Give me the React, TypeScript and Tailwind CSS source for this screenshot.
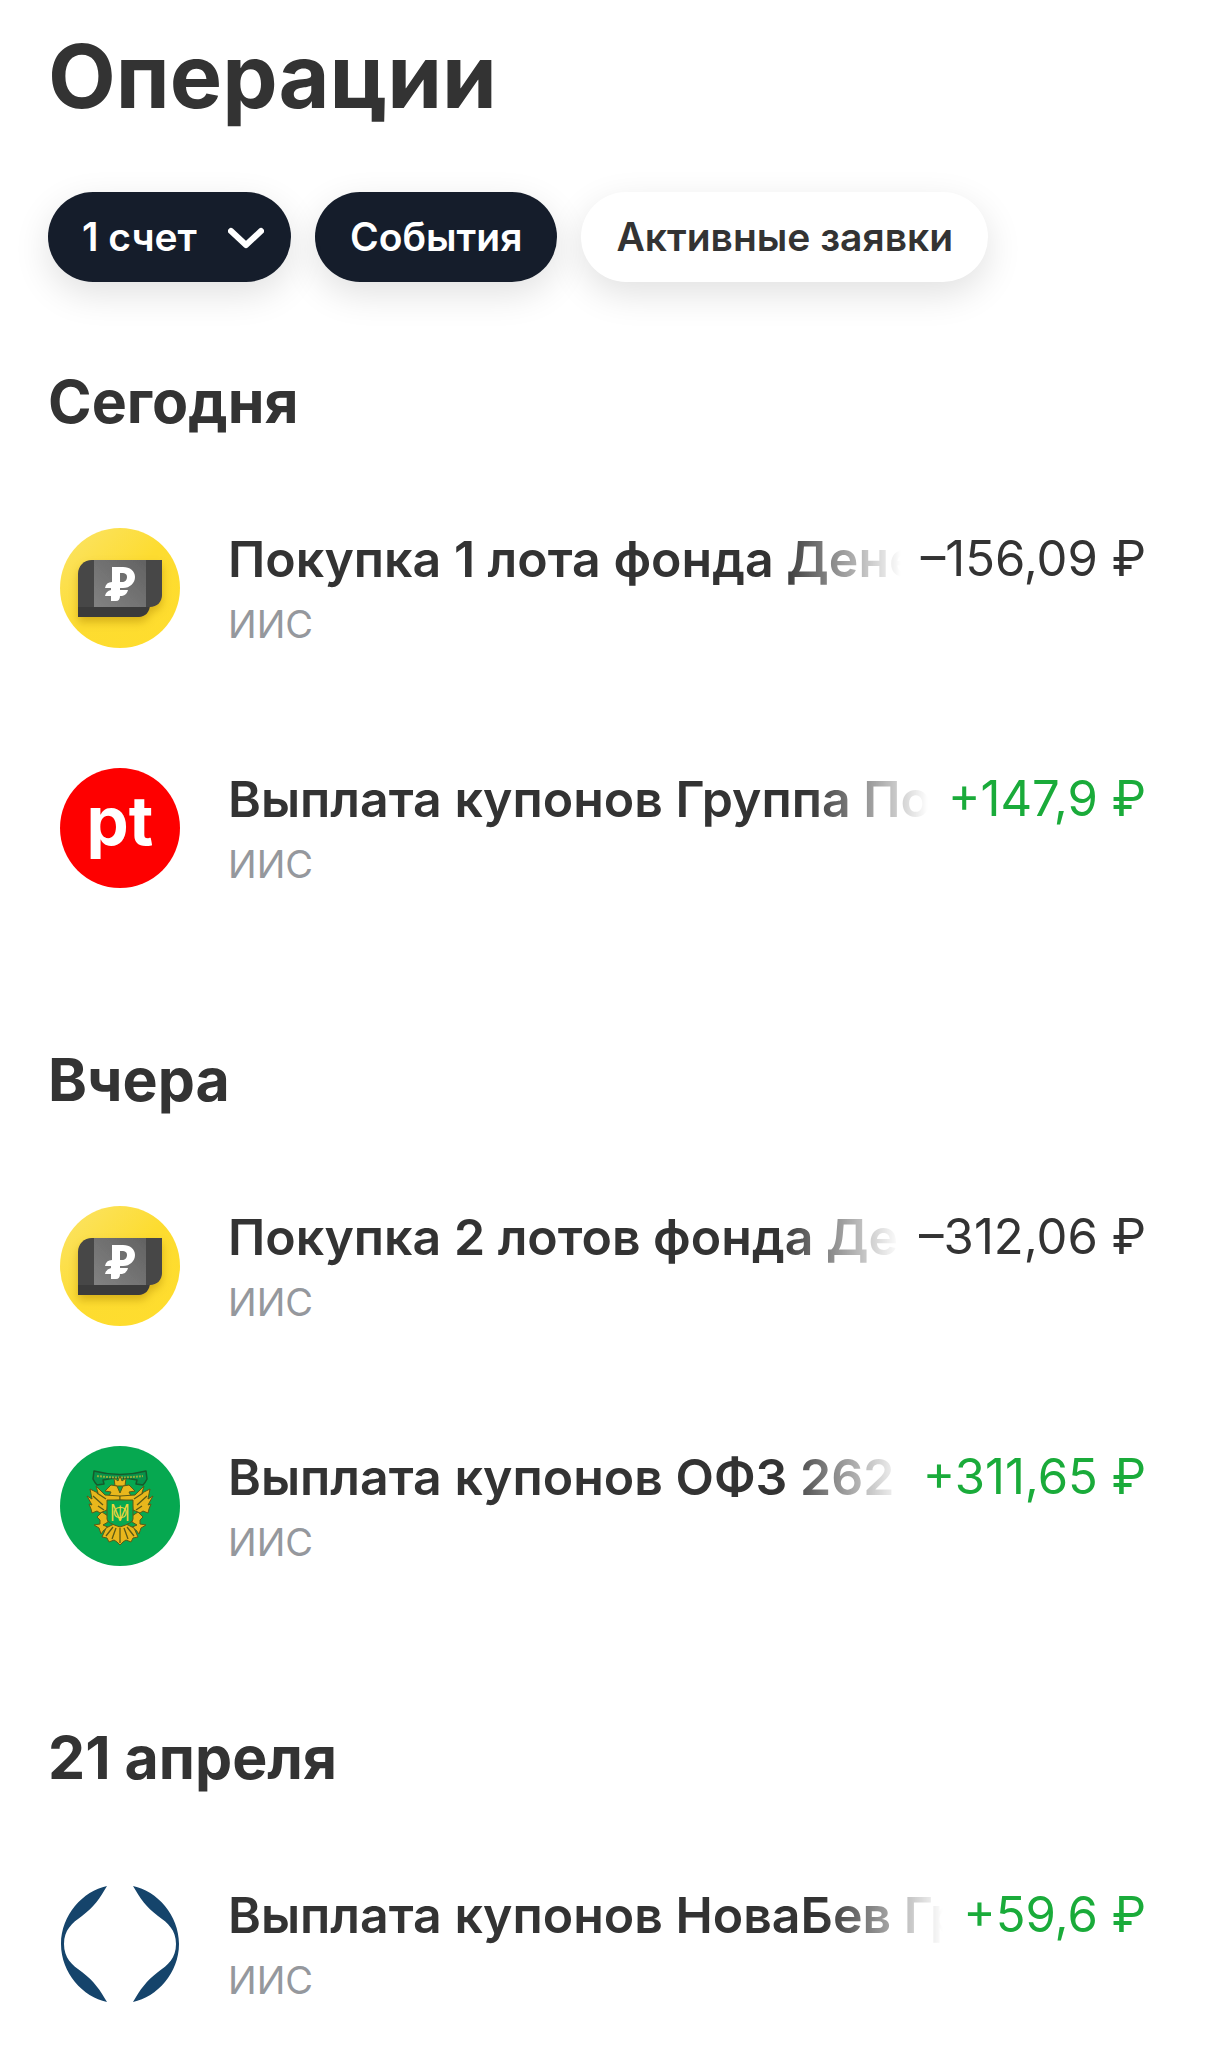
import type { ReactNode } from 'react';

type Operation = {
  title: string;
  account: string;
  amount: string;
  income?: boolean;
  icon: ReactNode;
};

type Day = { label: string; operations: Operation[] };

/** Money market fund: dark banknote on a yellow disc. */
function FundIcon() {
  return (
    <svg viewBox="0 0 120 120" className="size-[120px] shrink-0" aria-hidden="true">
      <defs>
        <linearGradient id="fund-disc" x1="0" y1="0" x2="1" y2="1">
          <stop offset="0" stopColor="#fbe46a" />
          <stop offset="0.5" stopColor="#fddc30" />
          <stop offset="1" stopColor="#ffdd2d" />
        </linearGradient>
        <linearGradient id="fund-note" x1="1" y1="0" x2="0" y2="1">
          <stop offset="0" stopColor="#626262" />
          <stop offset="1" stopColor="#828282" />
        </linearGradient>
        <filter id="fund-shadow" x="-20%" y="-20%" width="140%" height="160%">
          <feDropShadow dx="0" dy="5" stdDeviation="4" floodColor="#a87f00" floodOpacity="0.45" />
        </filter>
      </defs>
      <circle cx="60" cy="60" r="60" fill="url(#fund-disc)" />
      <g filter="url(#fund-shadow)">
        <path d="M18 78h72v-1c0 7-5 12-11 12H18z" fill="#3a3a3b" />
        <path d="M32 32h70v35c0 7-5 12-12 12H18V46c0-8 6-14 14-14z" fill="#464646" />
        <path d="M34 32h52v47H34z" fill="url(#fund-note)" />
      </g>
      <path
        d="M52 39h11c7 0 12 4 12 10s-5 11-12 11h-3v2h8q-1 5-6 6h-2q0 5-4 5h-5v-5h-6q1-5 6-6v-2h-6q1-6 7-6zM60 45v9h2c3 0 5-2 5-5s-2-4-5-4z"
        fill="#fff"
        fillRule="evenodd"
      />
    </svg>
  );
}

function PositiveIcon() {
  return (
    <svg viewBox="0 0 120 120" className="size-[120px] shrink-0" aria-hidden="true">
      <circle cx="60" cy="60" r="60" fill="#fe0000" />
      <text
        x="60"
        y="77"
        textAnchor="middle"
        fontFamily="Inter, sans-serif"
        fontSize="67"
        fontWeight="700"
        fill="#fff"
      >
        pt
      </text>
    </svg>
  );
}

/** Ministry of Finance emblem. */
function TreasuryIcon() {
  return (
    <svg viewBox="0 0 120 120" className="size-[120px] shrink-0" aria-hidden="true">
      <circle cx="60" cy="60" r="60" fill="#06a850" />
      {/* ribbon */}
      <path
        d="M34 25q26 7 52 0l1 8q-2 4-4 6l-7-1 1-4q-17-4-34 0l1 4-7 1q-2-2-4-6z"
        fill="#07924a"
        stroke="#175a2b"
        strokeWidth="1.5"
        strokeLinejoin="round"
      />
      <path d="M37 30q23 3 46 0" fill="none" stroke="#8fae3a" strokeWidth="2" strokeDasharray="2 1" />
      <g stroke="#5b5a16" strokeWidth="1" strokeLinejoin="round" fill="#e9b71c">
        {/* crown and heads */}
        <path d="M54 32l4 3 2-5 2 5 4-3-1 8H55z" />
        <path d="M45 45l6-6 6 1 3 7 3-7 6-1 6 6-6 1 3 6H48l3-6z" />
        {/* wings */}
        <path d="M30 43l8 4-2-7 9 9 15 1v4l-12 1-1 9-7 3-3-2-5 2-1-4-2-5 3 1-5-9 5 3z" />
        <path d="M90 43l-8 4 2-7-9 9-15 1v4l12 1 1 9 7 3 3-2 5 2 1-4 2-5-3 1 5-9-5 3z" />
        {/* claws */}
        <path d="M42 66l6 4v6l-5 3 7 3-6 2-3 4-2-6-5-3 6-1v-4l-3-3z" />
        <path d="M78 66l-6 4v6l5 3-7 3 6 2 3 4 2-6 5-3-6-1v-4l3-3z" />
        {/* tail */}
        <path d="M54 78l-8 4-4 9 5 1 2 4 5-2 3 2 3 3 3-3 3-2 5 2 2-4 5-1-4-9-8-4-6 2z" />
      </g>
      <path
        d="M60 82v15M56 82l-4 11M64 82l4 11M53 81l-7 9M67 81l7 9M33 50l10 9M37 47l9 6M38 60l6 4M87 50l-10 9M83 47l-9 6M82 60l-6 4"
        stroke="#5b5a16"
        strokeWidth="1.3"
      />
      <path d="M47 54h26v19q0 4-13 8-13-4-13-8z" fill="#06a850" stroke="#5b5a16" strokeWidth="1" />
      <g fontFamily="Roboto, sans-serif" fontWeight="300" fill="#f0d63c" textAnchor="middle">
        <text x="60" y="75" fontSize="24">
          М
        </text>
        <text x="60" y="73" fontSize="19">
          Ф
        </text>
      </g>
    </svg>
  );
}

function NovabevIcon() {
  return (
    <svg viewBox="0 0 120 120" className="size-[120px] shrink-0" aria-hidden="true" fill="#15446b">
      <path d="M47 2C23 7 1 31 1 60s22 53 46 58C40 106 34 97 22 88 12 81 4 74 4 60s8-21 18-28C34 23 40 14 47 2z" />
      <path d="M73 2c24 5 46 29 46 58s-22 53-46 58c7-12 13-21 25-30 10-7 18-14 18-28s-8-21-18-28C86 23 80 14 73 2z" />
    </svg>
  );
}

const DAYS: Day[] = [
  {
    label: 'Сегодня',
    operations: [
      { title: 'Покупка 1 лота фонда Дене', account: 'ИИС', amount: '–156,09 ₽', icon: <FundIcon /> },
      { title: 'Выплата купонов Группа По', account: 'ИИС', amount: '+147,9 ₽', income: true, icon: <PositiveIcon /> },
    ],
  },
  {
    label: 'Вчера',
    operations: [
      { title: 'Покупка 2 лотов фонда Де', account: 'ИИС', amount: '–312,06 ₽', icon: <FundIcon /> },
      { title: 'Выплата купонов ОФЗ 262', account: 'ИИС', amount: '+311,65 ₽', income: true, icon: <TreasuryIcon /> },
    ],
  },
  {
    label: '21 апреля',
    operations: [
      { title: 'Выплата купонов НоваБев Гр', account: 'ИИС', amount: '+59,6 ₽', income: true, icon: <NovabevIcon /> },
    ],
  },
];

function Filters() {
  return (
    <div className="mt-[62px] flex items-center gap-6 text-[39px] leading-[48px] font-semibold">
      <div className="relative h-[90px] rounded-full bg-[#151d2b] text-white shadow-[0_12px_36px_rgba(0,0,0,0.12)]">
        <select
          aria-label="Счет"
          className="h-full cursor-pointer appearance-none rounded-full bg-transparent pr-[94px] pl-[34px] outline-none"
        >
          <option>1 счет</option>
        </select>
        <svg
          viewBox="0 0 36 22"
          className="pointer-events-none absolute top-[35px] right-[27px] h-[22px] w-9"
          fill="none"
          stroke="currentColor"
          strokeWidth="6"
          strokeLinecap="round"
          strokeLinejoin="round"
          aria-hidden="true"
        >
          <path d="M3 4l15 14L33 4" />
        </svg>
      </div>
      <button
        type="button"
        aria-pressed="true"
        className="h-[90px] rounded-full bg-[#151d2b] px-[35px] text-white shadow-[0_12px_36px_rgba(0,0,0,0.12)]"
      >
        События
      </button>
      <button
        type="button"
        aria-pressed="false"
        className="h-[90px] rounded-full bg-white px-[35px] shadow-[0_12px_36px_rgba(0,0,0,0.12)]"
      >
        Активные заявки
      </button>
    </div>
  );
}

function OperationRow({ title, account, amount, income, icon }: Operation) {
  return (
    <li className="flex gap-12 px-3">
      {icon}
      <div className="min-w-0 flex-1">
        <div className="flex gap-5 leading-[62px]">
          {/* long titles fade out instead of getting an ellipsis */}
          <p className="min-w-0 flex-1 overflow-hidden text-[50px] font-semibold whitespace-nowrap [mask-image:linear-gradient(to_left,transparent,black_120px)]">
            {title}
          </p>
          <p className={income ? 'shrink-0 text-[49px] text-[#1aab3a]' : 'shrink-0 text-[49px]'}>{amount}</p>
        </div>
        <p className="mt-[10px] text-[38px] leading-[48px] text-[#95989d]">{account}</p>
      </div>
    </li>
  );
}

export default function App() {
  return (
    <main className="min-h-screen bg-white px-12 pt-[22px] pb-10 font-['Inter',sans-serif] text-[#333]">
      <h1 className="text-[88px] leading-[108px] font-bold">Операции</h1>
      <Filters />
      <div className="mt-[84px] flex flex-col gap-[156px]">
        {DAYS.map(({ label, operations }) => (
          <section key={label}>
            <h2 className="text-[59px] leading-[72px] font-bold">{label}</h2>
            <ul className="mt-[90px] flex flex-col gap-[120px]">
              {operations.map((operation) => (
                <OperationRow key={operation.title} {...operation} />
              ))}
            </ul>
          </section>
        ))}
      </div>
    </main>
  );
}
